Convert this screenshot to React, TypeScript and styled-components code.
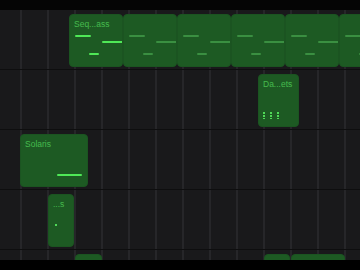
import styled, { createGlobalStyle } from 'styled-components';

const GlobalStyle = createGlobalStyle`
   html, body {
      margin: 0;
      padding: 0;
      background: #000;
   }
   * {
      box-sizing: border-box;
   }
`;

interface INote {
   x: number;
   y: number;
   w: number;
}

interface IClip {
   x: number;
   w: number;
   title?: string;
   dim?: boolean;
   notes?: INote[];
   drums?: number;
   dot?: boolean;
}

const seqNotes: INote[] = [
   { x: 5, y: 20, w: 16 },
   { x: 32, y: 26, w: 21 },
   { x: 19, y: 38, w: 10 },
];

const tracks: IClip[][] = [
   [
      { x: 69, w: 54, title: 'Seq...ass', notes: seqNotes },
      { x: 123, w: 54, dim: true, notes: seqNotes },
      { x: 177, w: 54, dim: true, notes: seqNotes },
      { x: 231, w: 54, dim: true, notes: seqNotes },
      { x: 285, w: 54, dim: true, notes: seqNotes },
      { x: 339, w: 54, dim: true, notes: seqNotes },
   ],
   [{ x: 258, w: 41, title: 'Da...ets', drums: 3 }],
   [{ x: 20, w: 68, title: 'Solaris', notes: [{ x: 36, y: 39, w: 25 }] }],
   [{ x: 48, w: 26, title: '...s', dot: true }],
   [
      { x: 75, w: 27 },
      { x: 264, w: 26 },
      { x: 291, w: 54, title: 'Sy...ia' },
   ],
];

const App = () => {
   return (
      <>
         <GlobalStyle />
         <Screen>
            <TopBar />
            <Timeline>
               {tracks.map((clips, i) => (
                  <Track key={i}>
                     {clips.map((clip, j) => (
                        <Clip key={j} style={{ left: clip.x, width: clip.w }}>
                           {clip.title && <ClipTitle>{clip.title}</ClipTitle>}
                           {clip.notes?.map((n, k) => (
                              <Note
                                 key={k}
                                 $dim={clip.dim}
                                 style={{ left: n.x, top: n.y, width: n.w }}
                              />
                           ))}
                           {clip.dot && <Dot />}
                           {clip.drums && (
                              <DrumRow>
                                 {Array.from({ length: clip.drums }).map((_, k) => (
                                    <DrumHit key={k} />
                                 ))}
                              </DrumRow>
                           )}
                        </Clip>
                     ))}
                  </Track>
               ))}
            </Timeline>
            <BottomBar />
         </Screen>
      </>
   );
};

const Screen = styled.div`
   width: 360px;
   height: 270px;
   display: flex;
   flex-direction: column;
   background: #050505;
   overflow: hidden;
   font-family: 'Liberation Sans', Arial, sans-serif;
`;

const TopBar = styled.div`
   height: 10px;
   flex-shrink: 0;
   background: #050505;
`;

const BottomBar = styled.div`
   height: 10px;
   flex-shrink: 0;
   background: #000;
`;

const Timeline = styled.div`
   flex: 1;
   overflow: hidden;
   background-color: #19191b;
   background-image: repeating-linear-gradient(
      to right,
      transparent 0,
      transparent 20px,
      #262629 20px,
      #262629 22px,
      transparent 22px,
      transparent 27px
   );
   background-size: 27px 100%;
`;

const Track = styled.div`
   position: relative;
   height: 60px;
   border-bottom: 1px solid #0e0e0f;
`;

const Clip = styled.div`
   position: absolute;
   top: 4px;
   height: 53px;
   display: flex;
   flex-direction: column;
   background: #1d5a23;
   border: 1px solid #1b5421;
   border-radius: 4px;
   padding: 4px 4px 7px 4px;
   overflow: hidden;
`;

const ClipTitle = styled.div`
   font-size: 8.5px;
   line-height: 10px;
   color: #46bb4e;
   white-space: nowrap;
`;

const Note = styled.div<{ $dim?: boolean }>`
   position: absolute;
   height: 2px;
   border-radius: 1px;
   background: ${({ $dim }) => ($dim ? '#3a8f41' : '#4fe857')};
`;

const DrumRow = styled.div`
   margin-top: auto;
   display: flex;
   gap: 5px;
`;

const DrumHit = styled.span`
   width: 2px;
   height: 7px;
   background: repeating-linear-gradient(
      to bottom,
      #4fd857 0,
      #4fd857 2px,
      transparent 2px,
      transparent 3px
   );
`;

const Dot = styled.span`
   width: 2px;
   height: 2px;
   margin: 15px 0 0 2px;
   background: #4fd857;
`;

export default App;
